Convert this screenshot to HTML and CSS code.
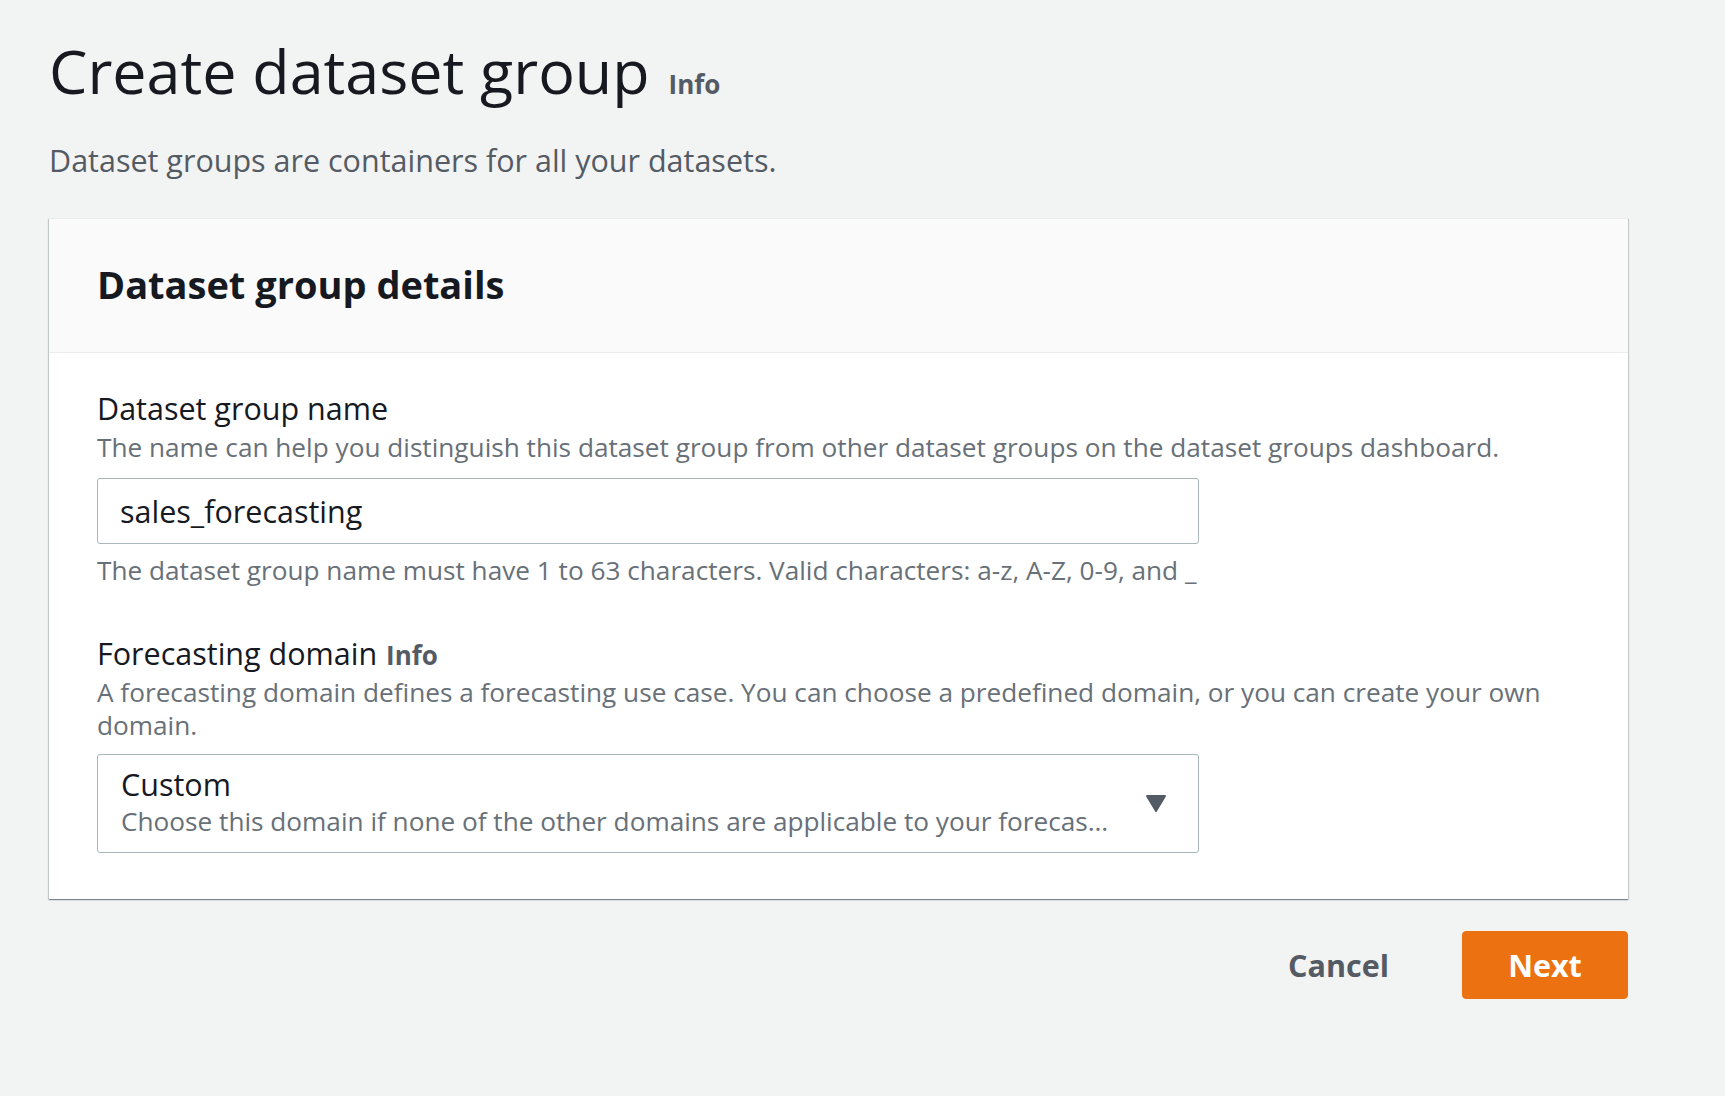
FILE: index.html
```html
<!DOCTYPE html>
<html lang="en">
<head>
<meta charset="utf-8">
<title>Create dataset group</title>
<link rel="stylesheet" href="styles.css">
</head>
<body>
<main class="page">
  <header class="page-header">
    <h1 class="page-title">Create dataset group<a class="info info-title">Info</a></h1>
    <p class="page-desc">Dataset groups are containers for all your datasets.</p>
  </header>

  <section class="card">
    <div class="card-header">
      <h2 class="card-title">Dataset group details</h2>
    </div>
    <div class="card-body">
      <div class="field">
        <label class="field-label" for="dsg-name">Dataset group name</label>
        <div class="field-desc">The name can help you distinguish this dataset group from other dataset groups on the dataset groups dashboard.</div>
        <input id="dsg-name" class="text-input" type="text" value="sales_forecasting">
        <div class="field-constraint">The dataset group name must have 1 to 63 characters. Valid characters: a-z, A-Z, 0-9, and _</div>
      </div>

      <div class="field field-second">
        <div class="field-label">Forecasting domain <a class="info info-label">Info</a></div>
        <div class="field-desc">A forecasting domain defines a forecasting use case. You can choose a predefined domain, or you can create your own domain.</div>
        <div class="select">
          <div class="select-content">
            <div class="select-value">Custom</div>
            <div class="select-desc">Choose this domain if none of the other domains are applicable to your forecasting scenario.</div>
          </div>
          <svg class="select-caret" width="22" height="19" viewBox="0 0 22 19" aria-hidden="true">
            <path d="M2 2 H20 L11 17 Z" fill="#545b64" stroke="#545b64" stroke-width="2" stroke-linejoin="round"/>
          </svg>
        </div>
      </div>
    </div>
  </section>

  <div class="actions">
    <button class="btn btn-link" type="button">Cancel</button>
    <button class="btn btn-primary" type="button">Next</button>
  </div>
</main>
</body>
</html>
```
FILE: styles.css
```css
html, body {
  margin: 0;
  padding: 0;
}
body {
  background: #f2f3f3;
  font-family: "Open Sans", "Noto Sans", sans-serif;
  color: #16191f;
}
.page {
  width: 1579px;
  margin-left: 49px;
  padding-top: 31px;
}
.page-title {
  margin: 0;
  font-size: 61px;
  line-height: 80px;
  height: 80px;
  font-weight: 400;
  color: #16191f;
  display: flex;
  align-items: baseline;
}
.info {
  font-weight: 700;
  color: #545b64;
  font-size: 26px;
  line-height: 1;
  cursor: pointer;
}
.info-title {
  margin-left: 19px;
}
.info-label {
  margin-left: 1px;
}
.page-desc {
  margin: 25px 0 0;
  font-size: 30.5px;
  line-height: 48px;
  color: #545b64;
}
.card {
  margin-top: 34px;
  background: #ffffff;
  border-top: 1px solid #eaeded;
  box-shadow: 0 1px 1px 0 rgba(0, 28, 36, 0.3), 1px 1px 1px 0 rgba(0, 28, 36, 0.15), -1px 1px 1px 0 rgba(0, 28, 36, 0.15);
}
.card-header {
  background: #fafafa;
  border-bottom: 1px solid #eaeded;
  padding: 40px 48px 43px;
}
.card-title {
  margin: 0;
  font-size: 38px;
  line-height: 50px;
  font-weight: 700;
  color: #16191f;
}
.card-body {
  padding: 34px 48px 46px;
}
.field-label {
  display: block;
  font-size: 30.5px;
  line-height: 43px;
  color: #16191f;
}
.field-desc,
.field-constraint {
  font-size: 26.2px;
  line-height: 33px;
  color: #687078;
}
.field-desc {
  margin-top: 1px;
}
.text-input {
  display: block;
  box-sizing: border-box;
  width: 1102px;
  height: 66px;
  margin: 14px 0 0;
  padding: 0 22px;
  border: 1px solid #aab7b8;
  border-radius: 3px;
  background: #ffffff;
  font-family: "Open Sans", "Noto Sans", sans-serif;
  font-size: 30.5px;
  color: #16191f;
  outline: none;
}
.field-constraint {
  margin-top: 10px;
}
.field-second {
  margin-top: 45px;
}
.select {
  margin-top: 12px;
  box-sizing: border-box;
  width: 1102px;
  height: 99px;
  border: 1px solid #aab7b8;
  border-radius: 3px;
  display: flex;
  align-items: flex-start;
  padding: 8px 31px 0 23px;
  background: #ffffff;
}
.select-content {
  flex: 1;
  min-width: 0;
  padding-right: 30px;
}
.select-value {
  font-size: 30.5px;
  line-height: 42px;
  color: #16191f;
}
.select-desc {
  font-size: 26.2px;
  line-height: 33px;
  color: #687078;
  white-space: nowrap;
  overflow: hidden;
  text-overflow: ellipsis;
}
.select-caret {
  flex: none;
  display: block;
  align-self: center;
  margin-top: -9px;
}
.actions {
  display: flex;
  justify-content: flex-end;
  align-items: center;
  margin-top: 32px;
  gap: 32px;
}
.btn {
  font-family: "Open Sans", "Noto Sans", sans-serif;
  font-size: 30.5px;
  font-weight: 700;
  height: 68px;
  border-radius: 4px;
  cursor: pointer;
}
.btn-link {
  background: transparent;
  border: none;
  color: #545b64;
  padding: 0 41px;
}
.btn-primary {
  background: #ec7211;
  border: 1px solid #ec7211;
  color: #ffffff;
  width: 166px;
  padding: 0;
}
```
